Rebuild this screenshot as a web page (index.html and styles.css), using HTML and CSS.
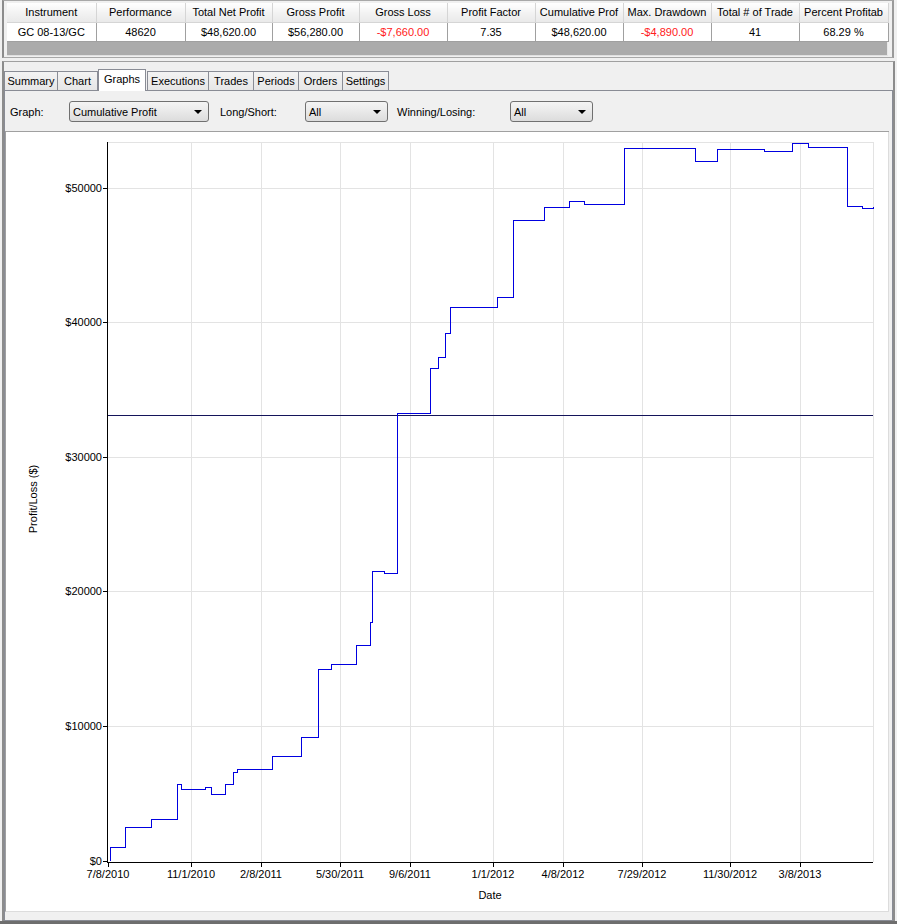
FILE: index.html
```html
<!DOCTYPE html>
<html>
<head>
<meta charset="utf-8">
<link rel="stylesheet" href="styles.css">
</head>
<body>
<div class="app">
  <div class="grid-panel">
    <div class="grid">
      <table class="stats">
        <thead>
          <tr>
            <th class="c1">Instrument</th><th class="c2">Performance</th><th class="c3">Total Net Profit</th><th class="c4">Gross Profit</th><th class="c5">Gross Loss</th><th class="c6">Profit Factor</th><th class="c7">Cumulative Prof</th><th class="c8">Max. Drawdown</th><th class="c9">Total # of Trade</th><th class="c10">Percent Profitab</th>
          </tr>
        </thead>
        <tbody>
          <tr>
            <td>GC 08-13/GC</td><td>48620</td><td>$48,620.00</td><td>$56,280.00</td><td class="neg">-$7,660.00</td><td>7.35</td><td>$48,620.00</td><td class="neg">-$4,890.00</td><td>41</td><td>68.29 %</td>
          </tr>
        </tbody>
      </table>
    </div>
  </div>
  <div class="tabs-panel">
    <div class="tabs">
      <div class="tab t-summary">Summary</div>
      <div class="tab t-chart">Chart</div>
      <div class="tab active t-graphs">Graphs</div>
      <div class="tab t-exec">Executions</div>
      <div class="tab t-trades">Trades</div>
      <div class="tab t-periods">Periods</div>
      <div class="tab t-orders">Orders</div>
      <div class="tab t-settings">Settings</div>
    </div>
    <div class="tab-body">
      <div class="controls">
        <span class="lbl l1">Graph:</span>
        <div class="combo wide"><span>Cumulative Profit</span><i class="arrow"></i></div>
        <span class="lbl l2">Long/Short:</span>
        <div class="combo"><span>All</span><i class="arrow"></i></div>
        <span class="lbl l3">Winning/Losing:</span>
        <div class="combo"><span>All</span><i class="arrow"></i></div>
      </div>
      <div class="chart">
        <svg class="plot" width="882" height="778" viewBox="6 133 882 778" xmlns="http://www.w3.org/2000/svg">
          <g class="grid-lines" stroke="#e3e3e3" stroke-width="1" fill="none" shape-rendering="crispEdges">
            <line x1="107" y1="143.5" x2="873" y2="143.5"/>
            <line x1="107" y1="189.5" x2="873" y2="189.5"/>
            <line x1="107" y1="323.5" x2="873" y2="323.5"/>
            <line x1="107" y1="458.5" x2="873" y2="458.5"/>
            <line x1="107" y1="592.5" x2="873" y2="592.5"/>
            <line x1="107" y1="727.5" x2="873" y2="727.5"/>
            <line x1="873.5" y1="143" x2="873.5" y2="863"/>
            <line x1="191.5" y1="143" x2="191.5" y2="863"/>
            <line x1="261.5" y1="143" x2="261.5" y2="863"/>
            <line x1="340.5" y1="143" x2="340.5" y2="863"/>
            <line x1="410.5" y1="143" x2="410.5" y2="863"/>
            <line x1="493.5" y1="143" x2="493.5" y2="863"/>
            <line x1="563.5" y1="143" x2="563.5" y2="863"/>
            <line x1="642.5" y1="143" x2="642.5" y2="863"/>
            <line x1="730.5" y1="143" x2="730.5" y2="863"/>
            <line x1="800.5" y1="143" x2="800.5" y2="863"/>
          </g>
          <line x1="107" y1="416.5" x2="873" y2="416.5" stroke="#14145a" stroke-width="1" shape-rendering="crispEdges"/>
          <path d="M110.5,862 V848.5 H125.5 V828.5 H151.5 V820.5 H177.5 V785.5 H181.5 V790.5 H205.5 V788.5 H211.5 V795.5 H225.5 V785.5 H233.5 V773.5 H237.5 V770.5 H272.5 V757.5 H301.5 V738.5 H318.5 V670.5 H331.5 V665.5 H356.5 V646.5 H370.5 V623.5 H372.5 V572.5 H384.5 V574.5 H397.5 V414.5 H430.5 V369.5 H438.5 V358.5 H445.5 V334.5 H450.5 V308.5 H497.5 V298.5 H513.5 V221.5 H544.5 V208.5 H569.5 V202.5 H584.5 V205.5 H624.5 V149.5 H695.5 V162.5 H717.5 V150.5 H764.5 V152.5 H792.5 V144.5 H808.5 V148.5 H847.5 V207.5 H862.5 V209.5 H873 V207.5" fill="none" stroke="#0000e0" stroke-width="1" shape-rendering="crispEdges"/>
          <g stroke="#000" stroke-width="1" shape-rendering="crispEdges">
            <line x1="107.5" y1="143" x2="107.5" y2="863"/>
            <line x1="107" y1="863.5" x2="873" y2="863.5"/>
            <line x1="103" y1="189.5" x2="107" y2="189.5"/>
            <line x1="103" y1="323.5" x2="107" y2="323.5"/>
            <line x1="103" y1="458.5" x2="107" y2="458.5"/>
            <line x1="103" y1="592.5" x2="107" y2="592.5"/>
            <line x1="103" y1="727.5" x2="107" y2="727.5"/>
            <line x1="103" y1="862.5" x2="107" y2="862.5"/>
            <line x1="108.5" y1="863" x2="108.5" y2="868"/>
            <line x1="191.5" y1="863" x2="191.5" y2="868"/>
            <line x1="261.5" y1="863" x2="261.5" y2="868"/>
            <line x1="340.5" y1="863" x2="340.5" y2="868"/>
            <line x1="410.5" y1="863" x2="410.5" y2="868"/>
            <line x1="493.5" y1="863" x2="493.5" y2="868"/>
            <line x1="563.5" y1="863" x2="563.5" y2="868"/>
            <line x1="642.5" y1="863" x2="642.5" y2="868"/>
            <line x1="730.5" y1="863" x2="730.5" y2="868"/>
            <line x1="800.5" y1="863" x2="800.5" y2="868"/>
          </g>
          <g class="ylabels" text-anchor="end">
            <text x="102" y="193">$50000</text>
            <text x="102" y="327">$40000</text>
            <text x="102" y="462">$30000</text>
            <text x="102" y="596">$20000</text>
            <text x="102" y="731">$10000</text>
            <text x="102" y="866">$0</text>
          </g>
          <g class="xlabels" text-anchor="middle">
            <text x="108" y="879">7/8/2010</text>
            <text x="191" y="879">11/1/2010</text>
            <text x="261" y="879">2/8/2011</text>
            <text x="340" y="879">5/30/2011</text>
            <text x="410" y="879">9/6/2011</text>
            <text x="493" y="879">1/1/2012</text>
            <text x="563" y="879">4/8/2012</text>
            <text x="642" y="879">7/29/2012</text>
            <text x="730" y="879">11/30/2012</text>
            <text x="800" y="879">3/8/2013</text>
          </g>
          <text class="axis-title" x="490" y="900" text-anchor="middle">Date</text>
          <text class="axis-title" x="37" y="500" text-anchor="middle" transform="rotate(-90 37 500)">Profit/Loss ($)</text>
        </svg>
      </div>
    </div>
  </div>
</div>
</body>
</html>
```

FILE: styles.css
```css
* { box-sizing: border-box; }
html, body { margin: 0; padding: 0; }
body {
  background: #f0f0f0;
  font-family: "Liberation Sans", Arial, sans-serif;
  font-size: 11px;
  color: #000;
}
.app {
  width: 897px;
  height: 924px;
  background: #f0f0f0;
  overflow: hidden;
  border-bottom: 3px solid #6e6e6e;
}
.grid-panel {
  height: 58px;
  margin: 0 3px 0 2px;
  border-left: 2px solid #8c8c8c;
  border-right: 2px solid #9a9a9a;
  border-top: 1px solid #a8a8a8;
  border-bottom: 1px solid #a8a8a8;
  padding: 2px 3px 0 3px;
}
.grid {
  width: 881px;
  height: 53px;
  background: #ababab;
  border-right: 1px solid #e8e8e8;
  border-bottom: 1px solid #e0e0e0;
}
.stats {
  border-collapse: collapse;
  table-layout: fixed;
  width: 881px;
}
.stats th {
  height: 19px;
  padding: 0;
  font-weight: normal;
  font-size: 11px;
  text-align: center;
  white-space: nowrap;
  overflow: hidden;
  background: linear-gradient(#ffffff, #f3f3f3 50%, #e9e9e9);
  border-right: 1px solid #d5d5d5;
  border-bottom: 1px solid #d5d5d5;
}
.stats td {
  height: 19px;
  padding: 0;
  text-align: center;
  background: #fff;
  border-right: 1px solid #a0a0a0;
  border-bottom: 1px solid #a0a0a0;
  white-space: nowrap;
}
.stats td.neg { color: #ff2020; }
.c1 { width: 89px; } .c2 { width: 89px; } .c3 { width: 87px; } .c4 { width: 87px; }
.c5 { width: 88px; } .c6 { width: 88px; } .c7 { width: 88px; } .c8 { width: 88px; }
.c9 { width: 88px; } .c10 { width: 89px; }

.tabs-panel {
  margin: 3px 2px 0 2px;
  height: 860px;
  border-left: 2px solid #8c8c8c;
  border-right: 2px solid #8c8c8c;
  border-top: 1px solid #a0a0a0;
  padding-top: 7px;
}
.tabs {
  display: flex;
  align-items: flex-end;
  height: 21px;
  position: relative;
  z-index: 1;
}
.tab {
  height: 19px;
  line-height: 18px;
  padding: 0;
  border: 1px solid #898c95;
  border-bottom: none;
  background: linear-gradient(#f3f3f3, #e6e6e6);
  margin-right: -1px;
  text-align: center;
  white-space: nowrap;
}
.tab.active {
  height: 22px;
  line-height: 19px;
  background: #fff;
  margin: 0 1px -1px 1px;
  position: relative;
  z-index: 2;
}
.t-summary { width: 54px; }
.t-chart { width: 41px; }
.t-graphs { width: 48px; }
.t-exec { width: 62px; }
.t-trades { width: 46px; }
.t-periods { width: 46px; }
.t-orders { width: 45px; }
.t-settings { width: 47px; }

.tab-body {
  border: 1px solid #898c95;
  height: 831px;
  width: 889px;
  padding: 0 3px 0 0;
  background: #f0f0f0;
}
.controls {
  height: 41px;
  display: flex;
  align-items: center;
  padding-left: 5px;
  padding-top: 1px;
  border-bottom: 1px solid #a0a0a0;
}
.lbl { display: block; }
.l1 { width: 59px; }
.l2 { width: 85px; margin-left: 11px; }
.l3 { width: 113px; margin-left: 9px; }
.combo {
  width: 83px;
  height: 21px;
  border: 1px solid #707070;
  border-radius: 3px;
  background: linear-gradient(#f4f4f4, #e9e9e9 50%, #dcdcdc);
  display: flex;
  align-items: center;
  justify-content: space-between;
  padding: 0 6px 0 3px;
}
.combo.wide { width: 140px; }
.arrow {
  width: 0;
  height: 0;
  border-left: 4px solid transparent;
  border-right: 4px solid transparent;
  border-top: 4px solid #000;
}
.chart {
  width: 884px;
  height: 780px;
  background: #fff;
  border-left: 1px solid #a0a0a0;
  border-right: 1px solid #dcdcdc;
  border-bottom: 1px solid #dcdcdc;
  margin-top: 0;
}
.plot { display: block; }
.plot text {
  font-family: "Liberation Sans", Arial, sans-serif;
  font-size: 11px;
  fill: #000;
}
```
